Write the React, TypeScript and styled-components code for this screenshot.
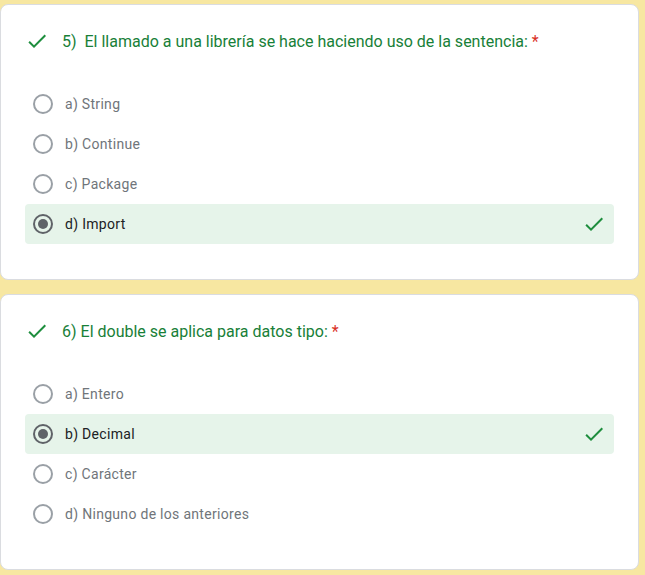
import React from 'react';
import styled, { createGlobalStyle } from 'styled-components';

const GlobalStyle = createGlobalStyle`
  html, body {
    margin: 0;
    padding: 0;
    background: #f7e7a1;
  }
  body {
    font-family: Roboto, "Liberation Sans", Arial, sans-serif;
  }
`;

interface Question {
  number: number;
  text: string;
  options: string[];
  selected: number;
}

const questions: Question[] = [
  {
    number: 5,
    text: 'El llamado a una librería se hace haciendo uso de la sentencia:',
    options: ['a) String', 'b) Continue', 'c) Package', 'd) Import'],
    selected: 3,
  },
  {
    number: 6,
    text: 'El double se aplica para datos tipo:',
    options: ['a) Entero', 'b) Decimal', 'c) Carácter', 'd) Ninguno de los anteriores'],
    selected: 1,
  },
];

const Page = styled.div`
  display: flex;
  flex-direction: column;
  gap: 14px;
  padding: 4px 6px 0 0;
  width: 645px;
  box-sizing: border-box;
`;

const QuestionCard = styled.section`
  box-sizing: border-box;
  height: 276px;
  background: #ffffff;
  border: 1px solid #dadce0;
  border-radius: 8px;
  padding: 24px 24px 0;
`;

const TitleRow = styled.div`
  display: flex;
  align-items: center;
  height: 24px;
  gap: 13px;
`;

const TitleText = styled.span`
  font-size: 16px;
  color: #188038;
  letter-spacing: 0;
  white-space: pre;
`;

const Required = styled.span`
  color: #d93025;
  margin-left: 4px;
`;

const OptionList = styled.div`
  display: flex;
  flex-direction: column;
  margin-top: 31px;
`;

const OptionRow = styled.div<{ $selected: boolean }>`
  display: flex;
  align-items: center;
  height: 40px;
  padding: 0 8px;
  border-radius: 4px;
  background: ${({ $selected }) => ($selected ? '#e6f4ea' : 'transparent')};
`;

const Radio = styled.span<{ $checked: boolean }>`
  box-sizing: border-box;
  width: 20px;
  height: 20px;
  border-radius: 50%;
  border: 2px solid ${({ $checked }) => ($checked ? '#5f6368' : '#9aa0a6')};
  display: flex;
  align-items: center;
  justify-content: center;
  flex-shrink: 0;

  &::after {
    content: '';
    width: 10px;
    height: 10px;
    border-radius: 50%;
    background: #5f6368;
    display: ${({ $checked }) => ($checked ? 'block' : 'none')};
  }
`;

const OptionLabel = styled.span<{ $selected: boolean }>`
  margin-left: 12px;
  font-size: 14px;
  letter-spacing: 0.3px;
  color: ${({ $selected }) => ($selected ? '#202124' : '#70757a')};
  flex: 1;
`;

const CheckIcon = ({ size = 24 }: { size?: number }) => (
  <svg width={size} height={size} viewBox="0 0 24 24" fill="#1e8e3e">
    <path d="M9 16.17L4.83 12l-1.42 1.41L9 19 21 7l-1.41-1.41z" />
  </svg>
);

export default function App() {
  return (
    <>
      <GlobalStyle />
      <Page>
        {questions.map((q) => (
          <QuestionCard key={q.number}>
            <TitleRow>
              <CheckIcon />
              <TitleText>
                {q.number}){q.number === 5 ? '  ' : ' '}
                {q.text}
                <Required>*</Required>
              </TitleText>
            </TitleRow>
            <OptionList>
              {q.options.map((opt, i) => {
                const sel = i === q.selected;
                return (
                  <OptionRow key={opt} $selected={sel}>
                    <Radio $checked={sel} />
                    <OptionLabel $selected={sel}>{opt}</OptionLabel>
                    {sel && <CheckIcon />}
                  </OptionRow>
                );
              })}
            </OptionList>
          </QuestionCard>
        ))}
      </Page>
    </>
  );
}
